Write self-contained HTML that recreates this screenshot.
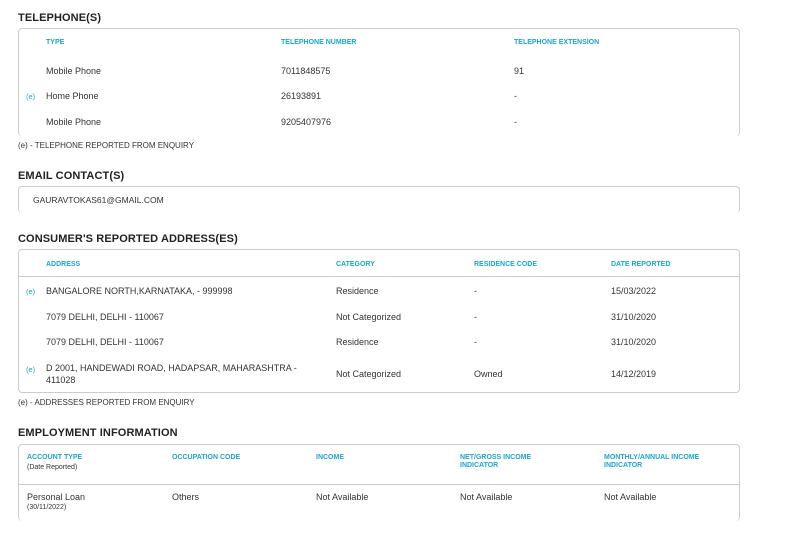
<!DOCTYPE html>
<html><head><meta charset="utf-8"><style>
*{margin:0;padding:0;box-sizing:border-box}
body{width:787px;height:551px;background:#fff;font-family:"Liberation Sans",sans-serif;color:#2a2a2a;position:relative;overflow:hidden}
.a{position:absolute;white-space:nowrap}
.h{font-size:11px;font-weight:bold;color:#222;letter-spacing:0.1px}
.th{font-size:7px;font-weight:bold;color:#1aa7c9}
.t{font-size:9px;color:#333}
.s{font-size:7px;color:#333}
.e{font-size:7.5px;color:#1aa7c9}
.box{position:absolute;left:18px;width:722px;border:1px solid #ccc;border-radius:4px}
.line{position:absolute;left:19px;width:720px;height:1px;background:#c8c8c8}
</style></head><body>
<div class="a h" style="left:18px;top:12px">TELEPHONE(S)</div>
<div class="box" style="top:28px;height:108px;border-bottom:none"></div>
<div class="a th" style="left:46px;top:39px">TYPE</div>
<div class="a th" style="left:281px;top:39px">TELEPHONE NUMBER</div>
<div class="a th" style="left:514px;top:39px">TELEPHONE EXTENSION</div>
<div class="a t" style="left:46px;top:66px">Mobile Phone</div>
<div class="a t" style="left:281px;top:66px">7011848575</div>
<div class="a t" style="left:514px;top:66px">91</div>
<div class="a e" style="left:26px;top:92px">(e)</div>
<div class="a t" style="left:46px;top:91px">Home Phone</div>
<div class="a t" style="left:281px;top:91px">26193891</div>
<div class="a t" style="left:514px;top:91px">-</div>
<div class="a t" style="left:46px;top:117px">Mobile Phone</div>
<div class="a t" style="left:281px;top:117px">9205407976</div>
<div class="a t" style="left:514px;top:117px">-</div>
<div class="a t" style="left:18px;top:141px;font-size:8px">(e) - TELEPHONE REPORTED FROM ENQUIRY</div>

<div class="a h" style="left:18px;top:170px">EMAIL CONTACT(S)</div>
<div class="box" style="top:186px;height:27px;border-bottom:none"></div>
<div class="a t" style="left:33px;top:195px;font-size:8.5px">GAURAVTOKAS61@GMAIL.COM</div>

<div class="a h" style="left:18px;top:233px">CONSUMER'S REPORTED ADDRESS(ES)</div>
<div class="box" style="top:249px;height:144px"></div>
<div class="line" style="top:276px"></div>
<div class="a th" style="left:46px;top:261px">ADDRESS</div>
<div class="a th" style="left:336px;top:261px">CATEGORY</div>
<div class="a th" style="left:474px;top:261px">RESIDENCE CODE</div>
<div class="a th" style="left:611px;top:261px">DATE REPORTED</div>
<div class="a e" style="left:26px;top:287px">(e)</div>
<div class="a t" style="left:46px;top:286px">BANGALORE NORTH,KARNATAKA, - 999998</div>
<div class="a t" style="left:336px;top:286px">Residence</div>
<div class="a t" style="left:474px;top:286px">-</div>
<div class="a t" style="left:611px;top:286px">15/03/2022</div>
<div class="a t" style="left:46px;top:312px">7079 DELHI, DELHI - 110067</div>
<div class="a t" style="left:336px;top:312px">Not Categorized</div>
<div class="a t" style="left:474px;top:312px">-</div>
<div class="a t" style="left:611px;top:312px">31/10/2020</div>
<div class="a t" style="left:46px;top:337px">7079 DELHI, DELHI - 110067</div>
<div class="a t" style="left:336px;top:337px">Residence</div>
<div class="a t" style="left:474px;top:337px">-</div>
<div class="a t" style="left:611px;top:337px">31/10/2020</div>
<div class="a e" style="left:26px;top:365px">(e)</div>
<div class="a t" style="left:46px;top:363px">D 2001, HANDEWADI ROAD, HADAPSAR, MAHARASHTRA -</div>
<div class="a t" style="left:46px;top:375px">411028</div>
<div class="a t" style="left:336px;top:369px">Not Categorized</div>
<div class="a t" style="left:474px;top:369px">Owned</div>
<div class="a t" style="left:611px;top:369px">14/12/2019</div>
<div class="a t" style="left:18px;top:398px;font-size:8px">(e) - ADDRESSES REPORTED FROM ENQUIRY</div>

<div class="a h" style="left:18px;top:427px">EMPLOYMENT INFORMATION</div>
<div class="box" style="top:444px;height:77px;border-bottom:none"></div>
<div class="line" style="top:484px"></div>
<div class="a th" style="left:27px;top:454px">ACCOUNT TYPE</div>
<div class="a s" style="left:27px;top:464px">(Date Reported)</div>
<div class="a th" style="left:172px;top:454px">OCCUPATION CODE</div>
<div class="a th" style="left:316px;top:454px">INCOME</div>
<div class="a th" style="left:460px;top:454px;line-height:8px">NET/GROSS INCOME<br>INDICATOR</div>
<div class="a th" style="left:604px;top:454px;line-height:8px">MONTHLY/ANNUAL INCOME<br>INDICATOR</div>
<div class="a t" style="left:27px;top:492px">Personal Loan</div>
<div class="a s" style="left:27px;top:504px">(30/11/2022)</div>
<div class="a t" style="left:172px;top:492px">Others</div>
<div class="a t" style="left:316px;top:492px">Not Available</div>
<div class="a t" style="left:460px;top:492px">Not Available</div>
<div class="a t" style="left:604px;top:492px">Not Available</div>
</body></html>
